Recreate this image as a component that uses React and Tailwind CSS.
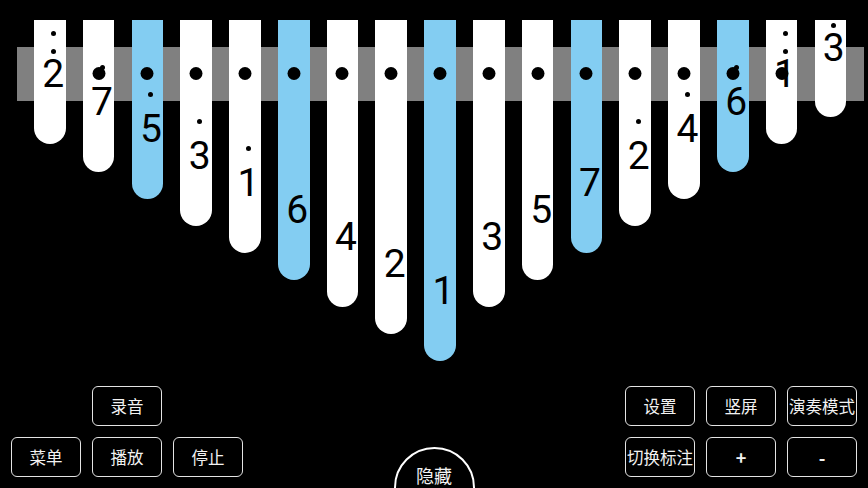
import React from "react";

const keys = [
    { n: "2", h: 124, dots: 2, screw: false },
    { n: "7", h: 152, dots: 1 },
    { n: "5", h: 179, dots: 1, blue: true },
    { n: "3", h: 206, dots: 1 },
    { n: "1", h: 233, dots: 1 },
    { n: "6", h: 260, blue: true },
    { n: "4", h: 287 },
    { n: "2", h: 314 },
    { n: "1", h: 341, blue: true },
    { n: "3", h: 287 },
    { n: "5", h: 260 },
    { n: "7", h: 233, blue: true },
    { n: "2", h: 206, dots: 1 },
    { n: "4", h: 179, dots: 1 },
    { n: "6", h: 152, dots: 1, blue: true },
    { n: "1", h: 124, dots: 2 },
    { n: "3", h: 97, dots: 1, tight: true, screw: false },
];

function Dot() {
    return <span className="block w-[5px] h-[5px] rounded-full bg-black" />;
}

function Key({ k }) {
    const close = k.dots === 2 || k.tight;
    return (
        <div
            className={`relative w-[31.6px] shrink-0 rounded-b-full flex flex-col items-center justify-end pl-[7px] ${
                k.tight ? "pb-[49px]" : "pb-[50px]"
            } ${k.blue ? "bg-[#83cdf2]" : "bg-white"}`}
            style={{ height: k.h }}
        >
            {k.screw !== false && (
                <span className="absolute top-[47px] left-1/2 -translate-x-1/2 w-[13px] h-[13px] rounded-full bg-black" />
            )}
            {k.dots > 0 && (
                <div
                    className={`relative flex flex-col items-center gap-[13px] ${
                        close ? "mb-[1.5px]" : "mb-[13.5px]"
                    }`}
                >
                    {Array.from({ length: k.dots }).map((_, i) => (
                        <Dot key={i} />
                    ))}
                </div>
            )}
            <span className="relative text-[39px] leading-[39px] text-black font-['Roboto',sans-serif]">
                {k.n}
            </span>
        </div>
    );
}

function Btn({ children, bold }) {
    return (
        <button
            className={`w-[70px] h-[40px] rounded-[6px] border-[1.5px] border-[#e4e4e4] bg-black text-[#f2f2f2] flex items-center justify-center whitespace-nowrap ${
                bold ? "text-[18px] font-bold" : "text-[16.5px]"
            }`}
        >
            {children}
        </button>
    );
}

export default function App() {
    return (
        <div className="w-[868px] h-[488px] bg-black overflow-hidden flex flex-col font-['Noto_Sans_CJK_SC','Noto_Sans',sans-serif]">
            {/* kalimba */}
            <div className="relative pt-[20px]">
                <div className="absolute left-[17px] top-[47px] w-[847px] h-[54px] bg-[#808080]" />
                <div className="relative flex items-start gap-[17.2px] pl-[34px]">
                    {keys.map((k, i) => (
                        <Key key={i} k={k} />
                    ))}
                </div>
            </div>

            <div className="flex-1" />

            {/* controls */}
            <div className="flex items-end justify-between px-[11px] pb-[11px]">
                <div className="grid grid-cols-3 gap-[11px]">
                    <div />
                    <Btn>录音</Btn>
                    <div />
                    <Btn>菜单</Btn>
                    <Btn>播放</Btn>
                    <Btn>停止</Btn>
                </div>

                <div className="w-[81px] h-[81px] mb-[-51px] rounded-full border-2 border-white bg-black flex justify-center pt-[14px]">
                    <span className="text-[18px] leading-[24px] text-[#f2f2f2]">隐藏</span>
                </div>

                <div className="grid grid-cols-3 gap-[11px]">
                    <Btn>设置</Btn>
                    <Btn>竖屏</Btn>
                    <Btn>演奏模式</Btn>
                    <Btn>切换标注</Btn>
                    <Btn bold>+</Btn>
                    <Btn bold>-</Btn>
                </div>
            </div>
        </div>
    );
}
